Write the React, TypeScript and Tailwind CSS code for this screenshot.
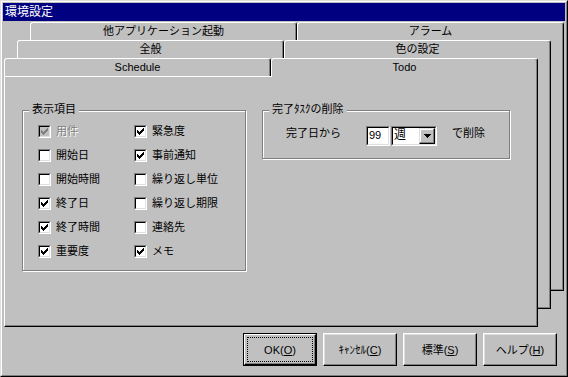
import React from 'react'

const CHECK = ['......X', '.....XX', 'X...XXX', 'XX.XXX.', 'XXXXX..', '.XXX...', '..X....']

function CheckMark({ color }: { color: string }) {
  return (
    <svg width="7" height="7" viewBox="0 0 7 7" shapeRendering="crispEdges">
      {CHECK.flatMap((row, y) =>
        row.split('').map((c, x) =>
          c === 'X' ? <rect key={`${x}-${y}`} x={x} y={y} width="1" height="1" fill={color} /> : null
        )
      )}
    </svg>
  )
}

function CheckBox({ checked, disabled }: { checked: boolean; disabled?: boolean }) {
  return (
    <span className="block w-[13px] h-[13px] shrink-0 border border-t-[#808080] border-l-[#808080] border-b-white border-r-white">
      <span
        className={
          disabled
            ? 'flex w-full h-full items-center justify-center border border-t-black border-l-black border-b-[#dfdfdf] border-r-[#dfdfdf] bg-[#c0c0c0]'
            : 'flex w-full h-full items-center justify-center border border-t-black border-l-black border-b-[#dfdfdf] border-r-[#dfdfdf] bg-white'
        }
      >
        {checked && <CheckMark color={disabled ? '#808080' : '#000000'} />}
      </span>
    </span>
  )
}

type Item = { label: string; checked: boolean; disabled?: boolean }

const items: Item[] = [
  { label: '用件', checked: true, disabled: true },
  { label: '緊急度', checked: true },
  { label: '開始日', checked: false },
  { label: '事前通知', checked: true },
  { label: '開始時間', checked: false },
  { label: '繰り返し単位', checked: false },
  { label: '終了日', checked: true },
  { label: '繰り返し期限', checked: false },
  { label: '終了時間', checked: true },
  { label: '連絡先', checked: false },
  { label: '重要度', checked: true },
  { label: 'メモ', checked: true },
]

function Sheet({
  tabs,
  selected,
  className,
  children,
}: {
  tabs: string[]
  selected?: number
  className: string
  children?: React.ReactNode
}) {
  return (
    <div className={`[grid-area:1/1] w-[534px] flex flex-col ${className}`}>
      <div className="flex h-[18px]">
        {tabs.map((t, i) => (
          <div
            key={t}
            className="w-[267px] h-[18px] bg-[#c0c0c0] border-t border-l border-r border-t-white border-l-white border-r-black rounded-t-[3px] shadow-[inset_-1px_0_0_#808080] text-center text-[11px] leading-[16px] text-black"
            data-selected={selected === i}
          >
            {t}
          </div>
        ))}
      </div>
      <div className="h-[251px] bg-[#c0c0c0] border-l border-r border-b border-l-white border-r-black border-b-black shadow-[inset_-1px_-1px_0_#808080]">
        {children}
      </div>
    </div>
  )
}

function GroupBox({ label, className, children }: { label: string; className: string; children?: React.ReactNode }) {
  return (
    <div className={`relative shrink-0 border border-[#808080] shadow-[inset_1px_1px_0_#fff,1px_1px_0_#fff] ${className}`}>
      <span className="absolute -top-[8px] left-[6px] bg-[#c0c0c0] px-[3px] text-[11px] leading-[12px] whitespace-nowrap">
        {label}
      </span>
      {children}
    </div>
  )
}

function Button({ children, focused }: { children: React.ReactNode; focused?: boolean }) {
  if (focused) {
    return (
      <div className="w-[74px] h-[33px] border border-black">
        <div className="w-full h-full border border-t-white border-l-white border-b-black border-r-black shadow-[inset_-1px_-1px_0_#808080] p-[2px]">
          <div className="w-full h-full border border-dotted border-black flex items-center justify-center text-[11px] leading-[12px]">
            {children}
          </div>
        </div>
      </div>
    )
  }
  return (
    <div className="w-[74px] h-[33px] border border-t-white border-l-white border-b-black border-r-black shadow-[inset_-1px_-1px_0_#808080,inset_1px_1px_0_#dfdfdf] flex items-center justify-center text-[11px] leading-[12px]">
      {children}
    </div>
  )
}

export default function App() {
  return (
    <div className="w-[568px] h-[377px] border border-t-[#dfdfdf] border-l-[#dfdfdf] border-r-black border-b-black bg-[#c0c0c0] text-black font-['Liberation_Sans','Noto_Sans_CJK_JP',sans-serif] overflow-hidden select-none">
      <div className="h-full border border-t-white border-l-white border-r-[#808080] border-b-[#808080] p-px flex flex-col">
        {/* title bar */}
        <div className="h-[18px] shrink-0 bg-[#000080] pl-[2px] text-white text-[12px] leading-[18px]">環境設定</div>

        {/* stacked tab sheets */}
        <div className="grid">
          <Sheet tabs={['他アプリケーション起動', 'アラーム']} className="mt-[1px] ml-[27px]" />
          <Sheet tabs={['全般', '色の設定']} className="mt-[19px] ml-[14px]" />
          <Sheet tabs={['Schedule', 'Todo']} selected={1} className="mt-[37px] ml-[1px]">
            <div className="h-px w-[267px] bg-white" />
            <div className="flex items-start pt-[33px] pl-[17px]">
              <GroupBox label="表示項目" className="w-[224px] h-[161px]">
                <div className="grid grid-cols-[96px_96px] gap-y-[11px] pt-[14px] pl-[15px]">
                  {items.map((it) => (
                    <div key={it.label} className="flex items-center h-[13px]">
                      <CheckBox checked={it.checked} disabled={it.disabled} />
                      <span
                        className={
                          it.disabled
                            ? 'ml-[5px] text-[11px] leading-[13px] whitespace-nowrap text-[#808080] [text-shadow:1px_1px_0_#fff]'
                            : 'ml-[5px] text-[11px] leading-[13px] whitespace-nowrap'
                        }
                      >
                        {it.label}
                      </span>
                    </div>
                  ))}
                </div>
              </GroupBox>

              <GroupBox label="完了ﾀｽｸの削除" className="ml-[16px] w-[248px] h-[49px]">
                <div className="flex items-start pt-[15px] pl-[23px]">
                  <span className="w-[80px] mt-[1px] text-[11px] leading-[12px] whitespace-nowrap">完了日から</span>
                  <div className="w-[24px] h-[20px] border border-t-[#808080] border-l-[#808080] border-b-white border-r-white">
                    <div className="w-full h-full border border-t-black border-l-black border-b-[#dfdfdf] border-r-[#dfdfdf] bg-white pl-px text-[11px] leading-[15px]">
                      99
                    </div>
                  </div>
                  <div className="ml-px w-[46px] h-[20px] border border-t-[#808080] border-l-[#808080] border-b-white border-r-white">
                    <div className="w-full h-full border border-t-black border-l-black border-b-[#dfdfdf] border-r-[#dfdfdf] bg-white flex">
                      <span className="flex-1 pl-px text-[12px] leading-[15px]">週</span>
                      <span className="w-[16px] h-[16px] border border-t-[#dfdfdf] border-l-[#dfdfdf] border-b-black border-r-black bg-[#c0c0c0] shadow-[inset_-1px_-1px_0_#808080,inset_1px_1px_0_#fff] flex items-center justify-center">
                        <svg width="7" height="4" viewBox="0 0 7 4" shapeRendering="crispEdges">
                          <path d="M0 0h7v1H0zM1 1h5v1H1zM2 2h3v1H2zM3 3h1v1H3z" fill="#000" />
                        </svg>
                      </span>
                    </div>
                  </div>
                  <span className="ml-[15px] mt-[1px] text-[11px] leading-[12px] whitespace-nowrap">で削除</span>
                </div>
              </GroupBox>
            </div>
          </Sheet>
        </div>

        {/* dialog buttons */}
        <div className="flex justify-end gap-[6px] pr-[8px] mt-[6px]">
          <Button focused>
            OK(<span className="underline">O</span>)
          </Button>
          <Button>
            ｷｬﾝｾﾙ(<span className="underline">C</span>)
          </Button>
          <Button>
            標準(<span className="underline">S</span>)
          </Button>
          <Button>
            ヘルプ(<span className="underline">H</span>)
          </Button>
        </div>
      </div>
    </div>
  )
}
